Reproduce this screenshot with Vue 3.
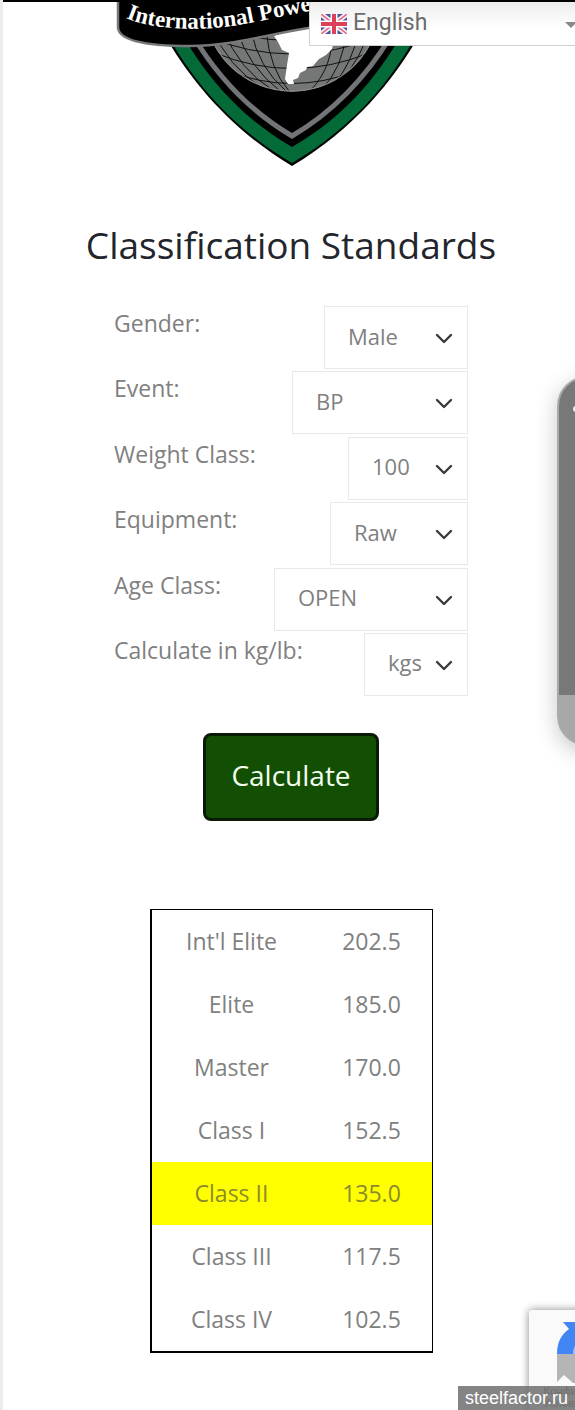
<script setup>
import { ref } from 'vue'

const fields = ref([
  { id: 'gender', label: 'Gender:', value: 'Male', options: ['Male', 'Female'], width: 144 },
  { id: 'event', label: 'Event:', value: 'BP', options: ['BP', 'PL', 'DL'], width: 176 },
  { id: 'weight', label: 'Weight Class:', value: '100', options: ['90', '100', '110'], width: 120 },
  { id: 'equipment', label: 'Equipment:', value: 'Raw', options: ['Raw', 'Single'], width: 138 },
  { id: 'age', label: 'Age Class:', value: 'OPEN', options: ['OPEN', 'Junior', 'Master'], width: 194 },
  { id: 'unit', label: 'Calculate in kg/lb:', value: 'kgs', options: ['kgs', 'lbs'], width: 104 },
])

const standards = [
  ["Int'l Elite", '202.5'],
  ['Elite', '185.0'],
  ['Master', '170.0'],
  ['Class I', '152.5'],
  ['Class II', '135.0'],
  ['Class III', '117.5'],
  ['Class IV', '102.5'],
]
const achieved = 'Class II'
const language = ref('English')
</script>

<template>
  <div class="page">
    <header class="top">
      <svg class="logo" viewBox="116 2 351 165" role="img" aria-label="International Powerlifting emblem">
        <defs>
          <clipPath id="globe"><circle cx="292" cy="3" r="89" /></clipPath>
          <path id="motto" d="M126 18 C150 29 200 33 250 23 S330 6 380 -2" />
        </defs>
        <path d="M164 34 C190 80 230 129 292 166 C354 129 394 80 420 34 V0 H164Z" fill="#020403" />
        <path d="M168 36 C194 82 232 128 292 163 C352 128 390 82 416 36 V0 H168Z" fill="#046b38" />
        <path d="M183 36 C208 78 240 117 292 147 C344 117 376 78 401 36 V0 H183Z" fill="#000" />
        <path d="M193 36 C216 74 246 109 292 136 C338 109 368 74 391 36" fill="none" stroke="#737477" stroke-width="5" />
        <g clip-path="url(#globe)">
          <circle cx="292" cy="3" r="89" fill="#747775" />
          <g fill="none" stroke="#111" stroke-width="1">
            <path d="M205 24 Q292 57 379 24" />
            <path d="M205 36 Q292 72 379 36" />
            <path d="M215 53 Q292 84 369 53" />
            <path d="M228 71 Q292 96 356 71" />
            <path d="M213 30 Q228 66 262 88" />
            <path d="M224 30 Q238 69 274 91" />
            <path d="M237 30 Q248 66 280 91" />
            <path d="M251 30 Q258 67 286 91" />
            <path d="M266 30 Q270 70 289 91" />
            <path d="M332 30 Q334 66 310 91" />
            <path d="M346 30 Q344 68 320 91" />
            <path d="M359 30 Q352 64 334 84" />
            <path d="M369 30 Q360 60 344 76" />
          </g>
          <circle cx="292" cy="3" r="88" fill="none" stroke="#8b8d8b" stroke-width="1" />
        </g>
        <path d="M274 36 L278 42 L282 50 L289 53 L287 65 L285 79 L288 84 L294 84 L293 80 L298 78 L300 73 L306 70 L307 67 L313 66 L319 59 L326 55 L332 49 L334 40 L324 28 L300 26Z" fill="#fff" />
        <path d="M118 0 V27 C118 41 146 46 190 46 C230 46 260 36 308 28 C350 20 410 20 464 0Z" fill="#000" stroke="#77787c" stroke-width="2.5" />
        <text class="motto"><textPath href="#motto">International Powerlifting</textPath></text>
      </svg>
      <div class="language">
        <svg class="flag" viewBox="0 0 26 20" aria-hidden="true">
          <rect width="26" height="20" rx="1" fill="#4c529b" />
          <path d="M0 0 L26 20 M26 0 L0 20" stroke="#f5eef5" stroke-width="5" />
          <path d="M0 0 L26 20 M26 0 L0 20" stroke="#e26b7d" stroke-width="1.5" />
          <path d="M13 0 V20 M0 10 H26" stroke="#fff" stroke-width="7" />
          <path d="M13 0 V20 M0 10 H26" stroke="#dc4257" stroke-width="4" />
        </svg>
        <select v-model="language" aria-label="Language">
          <option>English</option>
        </select>
        <svg class="caret" viewBox="0 0 12 6" aria-hidden="true"><path d="M0 0 H12 L6 6Z" fill="#888" /></svg>
      </div>
    </header>

    <main>
      <h1>Classification Standards</h1>
      <form @submit.prevent>
        <div class="fields">
          <div v-for="f in fields" :key="f.id" class="field">
            <label :for="f.id">{{ f.label }}</label>
            <div class="picker" :style="{ width: f.width + 'px' }">
              <select :id="f.id" v-model="f.value">
                <option v-for="o in f.options" :key="o">{{ o }}</option>
              </select>
              <svg class="chevron" viewBox="0 0 18 12" aria-hidden="true">
                <path d="M2 2 L9 9 L16 2" fill="none" stroke="#3a3a3c" stroke-width="2.4" stroke-linecap="round" stroke-linejoin="round" />
              </svg>
            </div>
          </div>
        </div>
        <button type="submit">Calculate</button>
      </form>

      <table>
        <tbody>
          <tr v-for="[name, total] in standards" :key="name" :class="{ achieved: name === achieved }">
            <td class="name">{{ name }}</td>
            <td class="total">{{ total }}</td>
          </tr>
        </tbody>
      </table>
    </main>

    <aside class="handle" aria-label="Side panel"><span class="dot"></span></aside>
    <aside class="captcha" aria-label="reCAPTCHA">
      <svg viewBox="0 0 60 64" aria-hidden="true">
        <path d="M0 32 C0 20 4 13 12 7 L6 0 H36 V32Z" fill="#4285f4" />
        <path d="M16 32 C16 26 18 22 24 20 V32Z" fill="#9dc0fa" />
        <path d="M0 32 H36 V60 L16 61 L7 53 L0 60Z" fill="#b5b5b5" />
      </svg>
      <small>Конфиденциальность<br />Условия</small>
    </aside>
    <div class="watermark">steelfactor.ru</div>
  </div>
</template>

<style>
body {
  margin: 0;
  background: #fff;
}
</style>

<style scoped>
* {
  box-sizing: border-box;
}
.page {
  position: relative;
  overflow: hidden;
  min-height: 100vh;
  padding-left: 4px;
  border-left: 3px solid #ececec;
  font-family: "Open Sans", "Noto Sans", sans-serif;
  font-size: 23px;
  color: #808080;
}
.page::before {
  content: "";
  position: absolute;
  top: 0;
  left: -3px;
  right: 0;
  height: 2px;
  background: #000;
}
.top {
  display: flex;
  justify-content: center;
  padding-top: 2px;
}
.logo {
  display: block;
  width: 351px;
  height: 165px;
}
.motto {
  font: bold 23px "Liberation Serif", serif;
  fill: #fff;
}
.language {
  position: absolute;
  top: 2px;
  right: -6px;
  width: 272px;
  height: 44px;
}
.language select {
  width: 100%;
  height: 100%;
  padding: 0 0 2px 43px;
  appearance: none;
  border: 1px solid #cfcfcf;
  border-top: 0;
  border-radius: 0;
  background: linear-gradient(#ededed, #fff 60%);
  font: 23px Roboto, sans-serif;
  color: #6c6c6c;
}
.flag {
  position: absolute;
  top: 12px;
  left: 12px;
  width: 26px;
  height: 20px;
}
.caret {
  position: absolute;
  top: 20px;
  right: 4px;
  width: 12px;
  height: 6px;
}
main {
  display: flex;
  flex-direction: column;
  align-items: center;
  padding: 50px 0 58px;
}
h1 {
  margin: 0 0 33px;
  font-size: 37px;
  line-height: 56px;
  font-weight: 400;
  color: #23252c;
  white-space: nowrap;
}
form {
  display: flex;
  flex-direction: column;
  align-items: center;
}
.fields {
  display: grid;
  width: 354px;
  height: 390px;
  align-content: space-between;
}
.field {
  display: flex;
  justify-content: space-between;
}
label {
  line-height: 34px;
  white-space: nowrap;
}
.picker {
  position: relative;
  height: 63px;
}
.picker select {
  width: 100%;
  height: 100%;
  padding: 0 0 4px 23px;
  appearance: none;
  border: 1px solid #e9e9e9;
  border-radius: 0;
  background: #fff;
  font: inherit;
  font-size: 22px;
  color: inherit;
}
.chevron {
  position: absolute;
  right: 15px;
  top: 27px;
  width: 18px;
  height: 12px;
  pointer-events: none;
}
button {
  height: 88px;
  margin: 37px 0 88px;
  padding: 0 25px 4px;
  border: 3px solid #0b1a08;
  border-radius: 8px;
  background: #134f02;
  font: 500 28px "Open Sans", sans-serif;
  color: #f3fff0;
}
table {
  width: 283px;
  border: 1px solid #000;
  border-left-width: 2px;
  border-bottom-width: 2px;
  border-spacing: 0;
}
td {
  height: 63px;
  padding: 0 0 2px;
  text-align: center;
}
.name {
  width: 160px;
}
.achieved {
  background: #ff0;
}
.achieved td {
  color: #8b8b2a;
}
.handle {
  position: absolute;
  top: 376px;
  right: -42px;
  width: 60px;
  height: 370px;
  border: 2px solid #aaa;
  border-radius: 36px;
  background: linear-gradient(#787878 317px, #a8a8a8 317px);
  box-shadow: 0 6px 22px rgba(0, 0, 0, 0.22);
}
.dot {
  position: absolute;
  top: 28px;
  left: 14px;
  width: 6px;
  height: 6px;
  border-radius: 50%;
  background: #eee;
}
.captcha {
  position: absolute;
  right: -64px;
  bottom: -10px;
  width: 110px;
  height: 111px;
  padding: 12px 0 0 28px;
  border-radius: 3px;
  background: #fafafa;
  box-shadow: 0 0 8px #888;
}
.captcha svg {
  display: block;
  width: 60px;
  height: 64px;
}
.captcha small {
  display: block;
  margin-left: -14px;
  font: 11px/12px Roboto, sans-serif;
  color: #777;
}
.watermark {
  position: absolute;
  right: 0;
  bottom: 0;
  padding: 0 7px;
  background: rgba(112, 112, 112, 0.86);
  font: 18px/25px "Liberation Sans", sans-serif;
  color: #fff;
}
</style>
